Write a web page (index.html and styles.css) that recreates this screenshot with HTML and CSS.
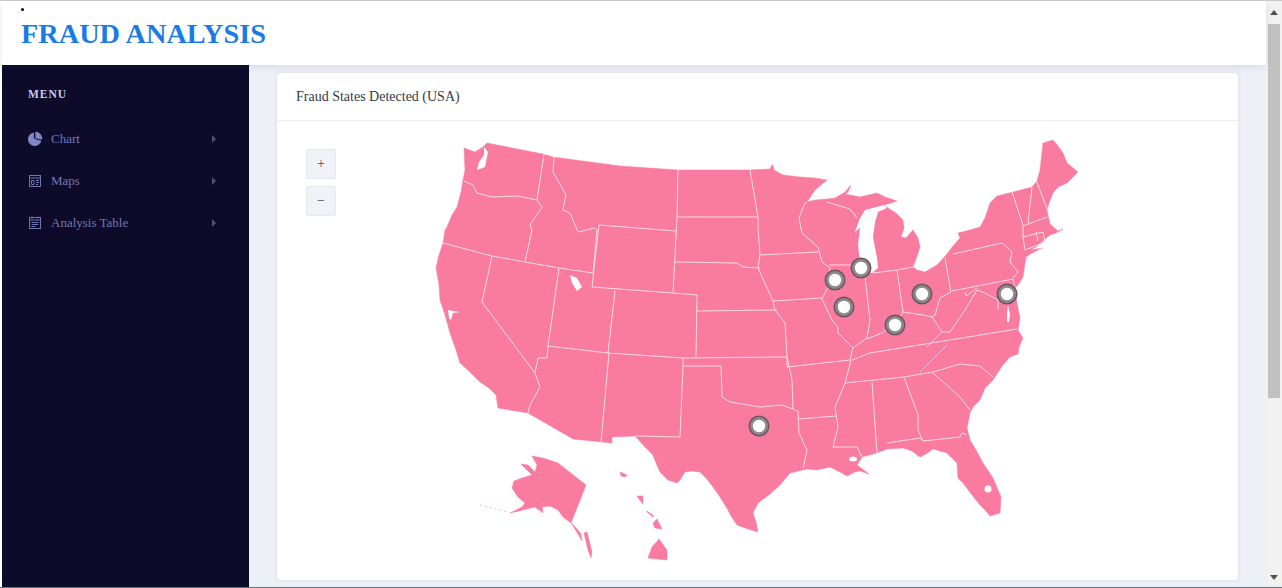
FILE: index.html
```html
<!DOCTYPE html>
<html lang="en">
<head>
    <meta charset="UTF-8">
    <title>Fraud Analysis</title>
    <link rel="stylesheet" href="styles.css">
</head>
<body>
    <div class="window">
        <div class="page">
            <header class="topbar">
                <span class="stray-dot"></span>
                <h1>FRAUD ANALYSIS</h1>
            </header>
            <div class="layout">
                <nav class="sidebar">
                    <h2>MENU</h2>
                    <ul class="menu">
                        <li>
                            <svg class="menu-icon" viewBox="0 0 16 16"><path d="M7 1.5a6.8 6.8 0 1 0 7.400 8.300L9.500 8.500 7 7z"/><path d="M8.300 0.500v6.300l2.200 1.200 4.700 0.500A7.300 7.300 0 0 0 8.300 0.500z"/></svg>
                            <span class="menu-label">Chart</span>
                            <span class="caret"></span>
                        </li>
                        <li>
                            <svg class="menu-icon outline" viewBox="0 0 16 16"><rect x="2.500" y="2.500" width="11" height="11"/><path d="M2.500 5h11M4.500 7.500h2.500v4H4.500zM9 7.500h3M9 9.500h3M9 11.500h2"/></svg>
                            <span class="menu-label">Maps</span>
                            <span class="caret"></span>
                        </li>
                        <li>
                            <svg class="menu-icon outline" viewBox="0 0 16 16"><rect x="2.500" y="2.500" width="11" height="11"/><path d="M2.500 5h11M4.500 7.500h7M4.500 9.500h7M4.500 11.500h4M5 1.500v2M11 1.500v2"/></svg>
                            <span class="menu-label">Analysis Table</span>
                            <span class="caret"></span>
                        </li>
                    </ul>
                </nav>
                <main class="content">
                    <section class="card">
                        <div class="card-header">Fraud States Detected (USA)</div>
                        <div class="card-body">
                            <div class="zoom-buttons">
                                <button>+</button>
                                <button>−</button>
                            </div>
                            <svg class="map" viewBox="277 121 961 459">
                                <defs>
                                    <g id="pin">
                                        <circle class="pin-edge" r="10.500"/>
                                        <circle class="pin-ring" r="9"/>
                                        <circle class="pin-core" r="6.200"/>
                                    </g>
                                </defs>
                                <g class="land">
                                    <path d="M487,143 543,154 553,157 620,166 678,170 750,170 770,169 772,165 773,165 774,170 783,175 800,177 815,178 827,180 815,190 807,202 815,200 827,199 835,198 845,192 851,185 848,192 845,194 860,197 877,193 885,197 897,201 884,205 888,208 896,213 903,220 904,228 901,237 906,238 913,230 918,238 920,247 917,256 913,267 917,270 925,272 937,265 947,254 953,246 960,238 958,233 970,230 980,227 985,218 987,212 990,203 997,196 1013,192 1032,187 1037,181 1040,170 1043,143 1053,140 1058,146 1063,153 1067,163 1078,172 1072,178 1067,183 1058,187 1053,193 1049,203 1047,211 1050,224 1058,231 1063,229 1056,233 1050,235 1044,240 1036,247 1030,250 1043,248 1030,254 1026,259 1025,263 1023,277 1018,285 1015,288 1017,303 1020,318 1018,330 1023,338 1019,347 1018,354 1010,357 1002,366 993,380 985,388 980,400 973,407 970,413 967,428 970,440 976,450 983,463 993,478 1001,497 1000,513 990,516 985,510 980,505 972,495 963,483 958,478 957,463 947,453 933,449 926,454 920,457 912,451 903,448 887,449 877,453 862,457 857,465 869,474 860,471 855,472 847,476 840,472 830,467 817,470 807,469 790,473 780,485 770,494 758,503 753,513 756,522 758,532 748,529 737,525 731,516 728,510 720,497 713,487 706,478 700,472 692,471 685,472 680,480 677,483 668,480 660,472 656,463 653,455 645,447 635,436 612,437 612,443 573,439 528,413 498,408 496,395 489,388 480,382 470,372 460,363 456,350 450,333 445,315 440,300 439,285 436,268 439,255 443,243 445,230 447,227 452,215 457,207 461,192 463,180 465,170 464,148 475,152 483,147Z"/>
                                    <!-- alaska -->
                                    <path d="M532,456 543,458 558,463 586,485 571,523 563,517 558,510 550,506 542,507 543,513 535,507 523,510 510,513 522,507 525,503 518,497 512,488 514,481 522,478 532,475 527,470 521,464 528,465 535,472 537,465Z"/>
                                    <path d="M571,523 577,529 581,534 582,541 578,534Z"/>
                                    <path d="M584,533 587,532 592,552 591,558 588,550Z"/>
                                    <!-- hawaii -->
                                    <path d="M648,558 652,547 659,539 667,550 667,560 657,559Z"/>
                                    <path d="M653,523 657,519 662,529 655,528Z"/>
                                    <path d="M637,496 643,496 643,504 639,499Z"/>
                                    <path d="M620,472 627,475 625,477 621,476Z"/>
                                    <path d="M647,511 654,516 653,517 647,512Z"/>
                                </g>
                                <path class="aleutians" d="M480,505 492,508 507,512"/>
                                <g class="water">
                                    <path d="M865,210 884,205 887,208 878,212 875,222 873,237 877,258 878,268 872,273 862,272 860,262 858,245 860,228 855,232 860,218Z"/>
                                    <path d="M484,147 488,152 485,167 477,170 479,162 484,155Z"/>
                                    <path d="M570,275 577,278 582,287 577,291 572,283Z"/>
                                    <path d="M448,310 453,311 460,312 453,313 451,320 449,318Z"/>
                                    <circle cx="988" cy="489" r="3.500"/>
                                    <ellipse cx="853" cy="459" rx="4" ry="2.500"/>
                                    <path d="M1008,305 1010,314 1009,322 1007,322 1007,313Z"/>
                                </g>
                                <g class="borders">
                                    <!-- northwest -->
                                    <path d="M464,181 473,185 477,193 492,197 517,196 537,200"/>
                                    <path d="M544,154 537,200 542,207 530,225 532,230 525,262"/>
                                    <path d="M443,243 492,256 525,262 559,268 593,273"/>
                                    <path d="M492,256 482,302 535,373 540,387 530,405 528,413"/>
                                    <path d="M535,373 538,358 547,358 548,346"/>
                                    <path d="M559,268 548,346 608,353 683,358 787,357"/>
                                    <path d="M554,157 553,172 566,195 563,210 570,213 578,232 595,228 597,230 593,273"/>
                                    <path d="M599,225 676,231"/>
                                    <path d="M599,225 592,287 673,293"/>
                                    <path d="M615,291 608,353"/>
                                    <path d="M673,293 697,295 696,357"/>
                                    <path d="M678,170 677,217 673,293"/>
                                    <path d="M677,217 758,217"/>
                                    <path d="M675,262 737,263 743,267 760,268"/>
                                    <path d="M697,311 777,310"/>
                                    <!-- midwest -->
                                    <path d="M750,170 758,217 758,227 760,255 818,252"/>
                                    <path d="M807,202 805,203 799,218 802,233 818,247 822,262 830,268 828,287 822,299 832,320 838,327 838,333 853,348 850,360 787,367"/>
                                    <path d="M760,255 758,268 773,301 775,310 785,323 787,357 787,367"/>
                                    <path d="M773,301 822,298"/>
                                    <path d="M829,265 862,265"/>
                                    <path d="M827,202 850,209 857,218"/>
                                    <path d="M865,277 870,320 867,338 853,348"/>
                                    <path d="M873,273 897,270 913,267"/>
                                    <path d="M897,270 903,312"/>
                                    <path d="M867,339 882,333 897,322 903,312 923,315 932,317 942,332"/>
                                    <path d="M945,258 951,292 940,298 935,315 932,317"/>
                                    <!-- south -->
                                    <path d="M683,358 683,366 721,366 722,397 730,402 760,407 782,405 798,411 799,433 807,450 803,468"/>
                                    <path d="M683,366 680,437 635,436"/>
                                    <path d="M609,353 601,442"/>
                                    <path d="M787,357 792,380 793,409"/>
                                    <path d="M799,419 836,416"/>
                                    <path d="M851,360 845,383 835,407 838,427 833,447 857,447 862,457"/>
                                    <path d="M872,382 877,453"/>
                                    <path d="M845,383 904,377 933,372 960,364 980,366 993,377"/>
                                    <path d="M904,377 918,415 918,430 923,441"/>
                                    <path d="M887,443 920,438 923,441 960,437 962,433 967,435"/>
                                    <path d="M933,373 960,397 970,410"/>
                                    <path d="M920,372 947,345"/>
                                    <path d="M852,360 870,353 1017,329"/>
                                    <path d="M927,347 942,332 950,332 965,310 977,290 985,293 998,300 998,310"/>
                                    <!-- northeast -->
                                    <path d="M953,254 1002,243 1012,252 1010,262 1018,272 1013,278"/>
                                    <path d="M952,291 1013,279 1017,297"/>
                                    <path d="M965,292 966,296 977,288"/>
                                    <path d="M1012,192 1023,225 1023,237 1025,250"/>
                                    <path d="M1032,187 1028,223"/>
                                    <path d="M1036,180 1048,211"/>
                                    <path d="M1023,226 1047,217"/>
                                    <path d="M1023,237 1043,232 1045,242"/>
                                    <path d="M1025,250 1045,242"/>
                                    <path d="M1025,258 1042,248"/>
                                    <path d="M1036,232 1038,241"/>
                                </g>
                                <use href="#pin" x="835" y="280"/>
                                <use href="#pin" x="861" y="268"/>
                                <use href="#pin" x="844" y="307"/>
                                <use href="#pin" x="922" y="294"/>
                                <use href="#pin" x="895" y="325"/>
                                <use href="#pin" x="1007" y="294"/>
                                <use href="#pin" x="759" y="426"/>
                            </svg>
                        </div>
                    </section>
                </main>
            </div>
        </div>
        <div class="scrollbar">
            <span class="arrow-up"></span>
            <span class="thumb"></span>
            <span class="arrow-down"></span>
        </div>
    </div>
</body>
</html>
```

FILE: styles.css
```css
html, body {
    margin: 0;
    height: 100%;
    overflow: hidden;
}

body {
    font-family: "Liberation Serif", "Times New Roman", serif;
    background: #fff;
    border-top: 1px solid #c9c9c9;
    border-bottom: 1px solid #6c7078;
    box-sizing: border-box;
}

.window {
    display: flex;
    height: 100%;
}

.page {
    flex: 1;
    display: flex;
    flex-direction: column;
    min-width: 0;
    padding-left: 2px;
}

.topbar {
    position: relative;
    z-index: 1;
    height: 64px;
    flex: none;
    box-sizing: border-box;
    display: flex;
    align-items: center;
    padding: 2px 0 0 19px;
    background: #fff;
    box-shadow: 0 2px 6px rgba(60, 60, 120, 0.12);
}

.topbar h1 {
    margin: 0;
    font-size: 28.300px;
    font-weight: bold;
    color: #1a7be6;
}

.stray-dot {
    position: absolute;
    left: 19px;
    top: 7px;
    width: 3px;
    height: 3px;
    background: #000;
    border-radius: 50%;
}

.layout {
    flex: 1;
    display: flex;
    min-height: 0;
}

.sidebar {
    width: 247px;
    flex: none;
    background: #0d0b29;
    padding: 22px 0 0 25px;
    box-sizing: border-box;
}

.sidebar h2 {
    margin: 0 0 17px 1px;
    font-size: 11.500px;
    font-weight: bold;
    letter-spacing: 1px;
    line-height: 14px;
    color: #c9cbed;
}

.menu {
    list-style: none;
    margin: 0;
    padding: 0;
}

.menu li {
    display: flex;
    align-items: center;
    height: 42px;
    font-size: 13px;
    color: #7077b5;
}

.menu-icon {
    width: 16px;
    height: 16px;
    margin-right: 8px;
    flex: none;
    fill: #8086c4;
}

.menu-icon.outline {
    fill: none;
    stroke: #6f75b0;
    stroke-width: 1;
}

.menu-label {
    flex: 1;
}

.caret {
    margin-right: 33px;
    border-left: 4px solid #4e5070;
    border-top: 4px solid transparent;
    border-bottom: 4px solid transparent;
}

.content {
    flex: 1;
    min-width: 0;
    background: #eef0f7;
    padding: 8px 28px 0;
}

.card {
    background: #fff;
    border-radius: 4px;
    box-shadow: 0 0 4px rgba(60, 60, 120, 0.12);
    height: 507px;
    display: flex;
    flex-direction: column;
}

.card-header {
    height: 48px;
    box-sizing: border-box;
    padding: 1px 0 0 19px;
    display: flex;
    align-items: center;
    font-size: 14px;
    color: #343a4a;
    border-bottom: 1px solid #eceef3;
    flex: none;
}

.card-body {
    position: relative;
    flex: 1;
    min-height: 0;
}

.map {
    display: block;
    width: 100%;
    height: 100%;
}

.zoom-buttons {
    position: absolute;
    left: 29px;
    top: 28px;
    display: flex;
    flex-direction: column;
    gap: 7px;
}

.zoom-buttons button {
    width: 30px;
    height: 30px;
    padding: 0;
    font-family: inherit;
    font-size: 14px;
    color: #4a4f5c;
    background: #f1f2f7;
    border: 1px solid #e6e8ef;
    border-radius: 2px;
}

.land {
    fill: #f97ba0;
    stroke: #f97ba0;
    stroke-width: 0.500;
    stroke-linejoin: round;
}

.aleutians {
    fill: none;
    stroke: #f97ba0;
    stroke-width: 1;
    stroke-dasharray: 2 3;
    opacity: 0.6;
}

.water {
    fill: #fff;
}

.borders {
    fill: none;
    stroke: #fcdbe5;
    stroke-width: 1;
}

.pin-edge {
    fill: #6e5560;
}

.pin-ring {
    fill: #8c8a8b;
}

.pin-core {
    fill: #fff;
}

.scrollbar {
    width: 16px;
    flex: none;
    background: #f1f1f1;
    display: flex;
    flex-direction: column;
    align-items: center;
}

.arrow-up {
    margin: 9px 0;
    border-bottom: 5px solid #505050;
    border-left: 4px solid transparent;
    border-right: 4px solid transparent;
}

.thumb {
    width: 12px;
    height: 374px;
    background: #c1c1c1;
}

.arrow-down {
    margin-top: auto;
    margin-bottom: 7px;
    border-top: 5px solid #505050;
    border-left: 4px solid transparent;
    border-right: 4px solid transparent;
}
```
